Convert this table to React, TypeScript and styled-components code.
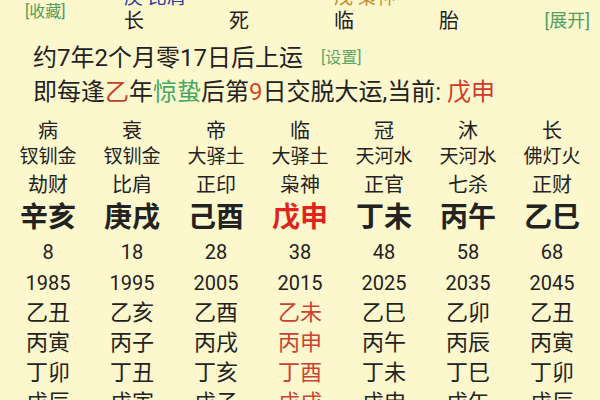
import React from "react";
import styled, { createGlobalStyle } from "styled-components";

const Global = createGlobalStyle`
  html, body { margin: 0; padding: 0; background: #fcf7cd; overflow: hidden; }
  body { font-family: Roboto, "Noto Sans CJK SC", sans-serif; color: #222; }
`;

const Page = styled.div`
  width: 600px;
  height: 400px;
  overflow: hidden;
  background: #fcf7cd;
`;

const Inner = styled.div`
  margin-top: -13px;
`;

const TopGrid = styled.div`
  display: grid;
  grid-template-columns: 80px repeat(4, 105px) 1fr;
  grid-template-rows: 22px 24px;
`;

const Fav = styled.div`
  grid-column: 1;
  grid-row: 1 / span 2;
  align-self: center;
  padding-left: 25px;
  font-size: 16px;
  color: #4f9e5c;
  white-space: nowrap;
`;

const Expand = styled.div`
  grid-column: 6;
  grid-row: 2;
  text-align: right;
  padding-right: 10px;
  font-size: 18px;
  line-height: 24px;
  color: #4f9e5c;
  white-space: nowrap;
`;

const TopCell = styled.div<{ $col: number; $row: number; $color?: string; $size?: number }>`
  grid-column: ${(p) => p.$col};
  grid-row: ${(p) => p.$row};
  padding-left: 44px;
  font-size: ${(p) => p.$size ?? 20}px;
  line-height: ${(p) => (p.$row === 1 ? 22 : 24)}px;
  color: ${(p) => p.$color ?? "#222"};
  white-space: nowrap;
`;

const InfoLine = styled.div<{ $first?: boolean }>`
  height: 34px;
  line-height: 34px;
  padding-left: 33px;
  font-size: 24px;
  white-space: nowrap;
  margin-top: ${(p) => (p.$first ? 8 : 0)}px;
`;

const Tint = styled.span<{ $c: string }>`
  color: ${(p) => p.$c};
`;

const Setting = styled.span`
  font-size: 16px;
  color: #5aa868;
  margin-left: 18px;
  vertical-align: 3px;
`;

const Table = styled.div`
  margin-top: 9px;
  padding: 0 6px;
  display: grid;
  grid-template-columns: repeat(7, 84px);
`;

const Cell = styled.div<{ $h: number; $size: number; $bold?: boolean; $color?: string }>`
  height: ${(p) => p.$h}px;
  line-height: ${(p) => p.$h}px;
  font-size: ${(p) => p.$size}px;
  font-weight: ${(p) => (p.$bold ? 700 : 400)};
  color: ${(p) => p.$color ?? "#222"};
  text-align: center;
  white-space: nowrap;
`;

type Row = { cells: string[]; h: number; size: number; bold?: boolean; red?: string };

const rows: Row[] = [
  { cells: ["病", "衰", "帝", "临", "冠", "沐", "长"], h: 26, size: 20 },
  { cells: ["钗钏金", "钗钏金", "大驿土", "大驿土", "天河水", "天河水", "佛灯火"], h: 26, size: 19 },
  { cells: ["劫财", "比肩", "正印", "枭神", "正官", "七杀", "正财"], h: 30, size: 20 },
  { cells: ["辛亥", "庚戌", "己酉", "戊申", "丁未", "丙午", "乙巳"], h: 36, size: 28, bold: true, red: "#e0231c" },
  { cells: ["8", "18", "28", "38", "48", "58", "68"], h: 32, size: 20 },
  { cells: ["1985", "1995", "2005", "2015", "2025", "2035", "2045"], h: 30, size: 20 },
  { cells: ["乙丑", "乙亥", "乙酉", "乙未", "乙巳", "乙卯", "乙丑"], h: 30, size: 22, red: "#c94234" },
  { cells: ["丙寅", "丙子", "丙戌", "丙申", "丙午", "丙辰", "丙寅"], h: 30, size: 22, red: "#c94234" },
  { cells: ["丁卯", "丁丑", "丁亥", "丁酉", "丁未", "丁巳", "丁卯"], h: 30, size: 22, red: "#c94234" },
  { cells: ["戊辰", "戊寅", "戊子", "戊戌", "戊申", "戊午", "戊辰"], h: 30, size: 22, red: "#c94234" },
];

export default function App() {
  return (
    <Page>
      <Global />
      <Inner>
        <TopGrid>
          <Fav>[收藏]</Fav>
          <TopCell $col={2} $row={1} $color="#2f3d9c" $size={19}>庚 比肩</TopCell>
          <TopCell $col={4} $row={1} $color="#c08a2c" $size={19}>戊 枭神</TopCell>
          <TopCell $col={2} $row={2}>长</TopCell>
          <TopCell $col={3} $row={2}>死</TopCell>
          <TopCell $col={4} $row={2}>临</TopCell>
          <TopCell $col={5} $row={2}>胎</TopCell>
          <Expand>[展开]</Expand>
        </TopGrid>
        <InfoLine $first>
          约7年2个月零17日后上运<Setting>[设置]</Setting>
        </InfoLine>
        <InfoLine>
          即每逢<Tint $c="#c4402f">乙</Tint>年<Tint $c="#45a865">惊蛰</Tint>后第
          <Tint $c="#d2481f">9</Tint>日交脱大运,当前: <Tint $c="#d0382a">戊申</Tint>
        </InfoLine>
        <Table>
          {rows.map((r, ri) =>
            r.cells.map((c, ci) => (
              <Cell
                key={`${ri}-${ci}`}
                $h={r.h}
                $size={r.size}
                $bold={r.bold}
                $color={ci === 3 && r.red ? r.red : undefined}
              >
                {c}
              </Cell>
            ))
          )}
        </Table>
      </Inner>
    </Page>
  );
}
